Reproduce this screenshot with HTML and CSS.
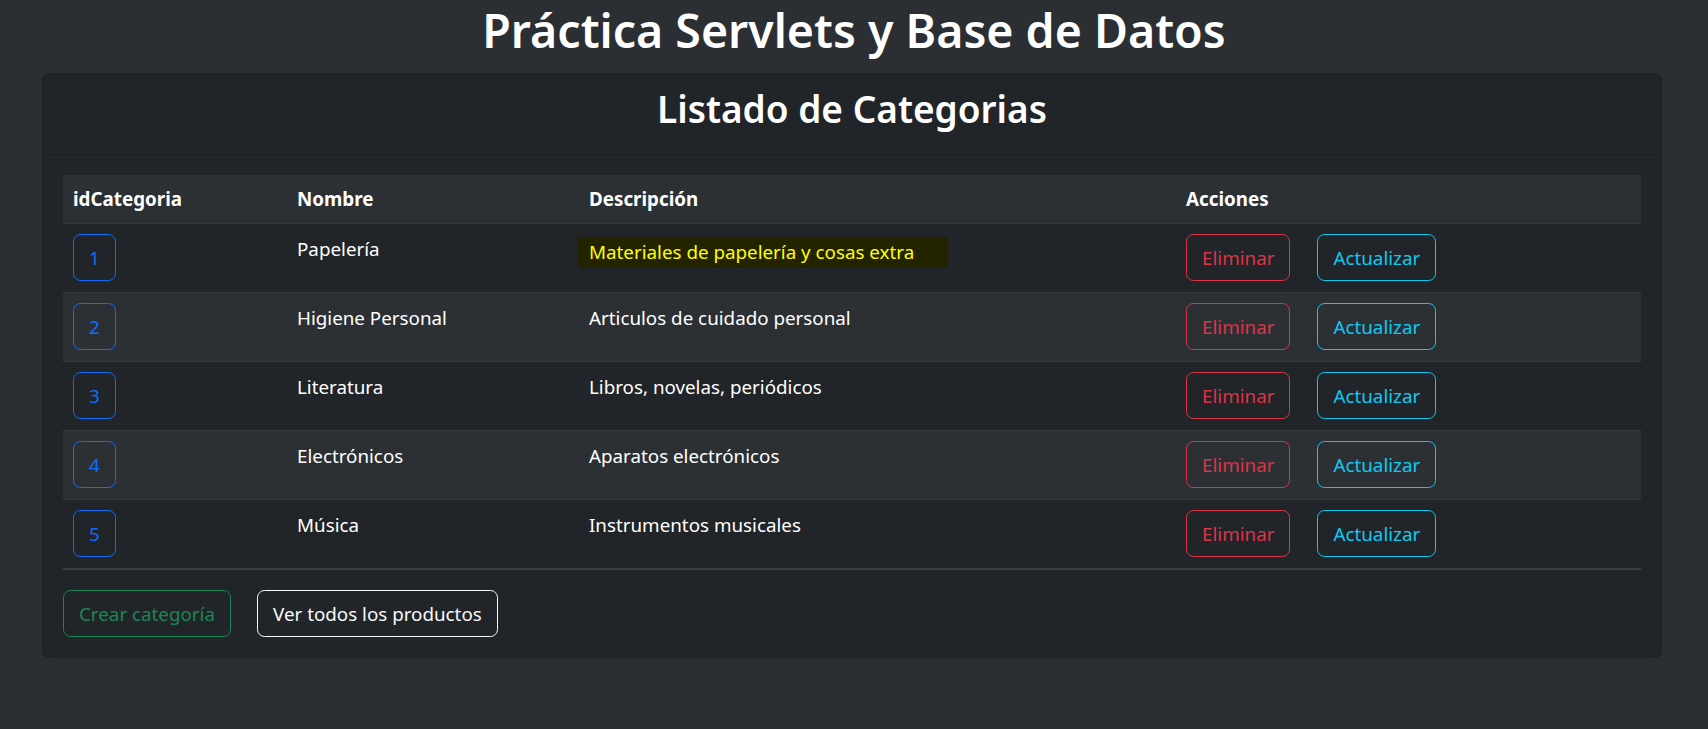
FILE: index.html
```html
<!DOCTYPE html>
<html lang="es">
<head>
<meta charset="utf-8">
<title>Práctica Servlets y Base de Datos</title>
<link rel="stylesheet" href="styles.css">
</head>
<body>
<h1 class="title">Práctica Servlets y Base de Datos</h1>
<div class="card">
  <div class="card-header">
    <h2 class="card-title">Listado de Categorias</h2>
  </div>
  <div class="card-body">
    <table class="table">
      <colgroup>
        <col class="c1"><col class="c2"><col class="c3"><col class="c4">
      </colgroup>
      <thead>
        <tr><th>idCategoria</th><th>Nombre</th><th>Descripción</th><th>Acciones</th></tr>
      </thead>
      <tbody>
        <tr>
          <td><a class="btn btn-primary">1</a></td>
          <td>Papelería</td>
          <td><span class="marker">Materiales de papelería y cosas extra</span></td>
          <td><div class="actions"><a class="btn btn-danger">Eliminar</a><a class="btn btn-info">Actualizar</a></div></td>
        </tr>
        <tr class="stripe">
          <td><a class="btn btn-primary">2</a></td>
          <td>Higiene Personal</td>
          <td>Articulos de cuidado personal</td>
          <td><div class="actions"><a class="btn btn-danger">Eliminar</a><a class="btn btn-info">Actualizar</a></div></td>
        </tr>
        <tr>
          <td><a class="btn btn-primary">3</a></td>
          <td>Literatura</td>
          <td>Libros, novelas, periódicos</td>
          <td><div class="actions"><a class="btn btn-danger">Eliminar</a><a class="btn btn-info">Actualizar</a></div></td>
        </tr>
        <tr class="stripe">
          <td><a class="btn btn-primary">4</a></td>
          <td>Electrónicos</td>
          <td>Aparatos electrónicos</td>
          <td><div class="actions"><a class="btn btn-danger">Eliminar</a><a class="btn btn-info">Actualizar</a></div></td>
        </tr>
        <tr class="last">
          <td><a class="btn btn-primary">5</a></td>
          <td>Música</td>
          <td>Instrumentos musicales</td>
          <td><div class="actions"><a class="btn btn-danger">Eliminar</a><a class="btn btn-info">Actualizar</a></div></td>
        </tr>
      </tbody>
    </table>
    <div class="footer-actions">
      <a class="btn btn-success">Crear categoría</a>
      <a class="btn btn-light">Ver todos los productos</a>
    </div>
  </div>
</div>
</body>
</html>
```
FILE: styles.css
```css
* { box-sizing: border-box; }
html, body { margin: 0; padding: 0; }
body {
  background: #2b2f34;
  color: #ffffff;
  font-family: "Noto Sans", "Open Sans", sans-serif;
  font-size: 18.8px;
  line-height: 30px;
}
.title {
  margin: 0 0 13px;
  text-align: center;
  font-size: 46.5px;
  font-weight: 600;
  line-height: 60px;
}
.card {
  margin: 0 46px 0 42px;
  background: #212428;
  border: 1px solid #1d2024;
  border-radius: 7px;
}
.card-header {
  padding: 11px 20px 13px;
  border-bottom: 1px solid #1b1e21;
  text-align: center;
}
.card-title {
  margin: 0 0 8px;
  font-size: 37px;
  font-weight: 600;
  line-height: 48px;
}
.card-body { padding: 20px; }
.table {
  width: 100%;
  border-collapse: collapse;
  margin-bottom: 20px;
}
.c1 { width: 224px; }
.c2 { width: 292px; }
.c3 { width: 597px; }
.table th, .table td {
  padding: 10px 10px 11px;
  text-align: left;
  vertical-align: top;
  border-bottom: 1px solid #34383c;
}
.table th {
  padding: 9px 10px;
  background: #2c3035;
  font-weight: 700;
}
.table tr.stripe td { background: #2c3035; }
.table tr.last td { border-bottom: 2px solid #3a3e41; }
.btn {
  display: inline-block;
  padding: 7.5px 15px;
  border: 1px solid transparent;
  border-radius: 7.5px;
  font-size: 18.8px;
  line-height: 30px;
  text-decoration: none;
  background: transparent;
}
.btn-primary { color: #0d6efd; border-color: #0d6efd; }
.btn-danger { color: #dc3545; border-color: #dc3545; }
.btn-info { color: #0dcaf0; border-color: #0dcaf0; }
.btn-success { color: #198754; border-color: #198754; }
.btn-light { color: #f8f9fa; border-color: #f8f9fa; }
.actions { display: flex; gap: 27px; }
.footer-actions { display: flex; gap: 26px; }
.marker {
  display: inline-block;
  margin: 3px 0 0 -11px;
  padding: 0 34px 1px 11px;
  background: #232300;
  color: #ffff00;
  border-radius: 3px 2px 4px 3px;
}
```
